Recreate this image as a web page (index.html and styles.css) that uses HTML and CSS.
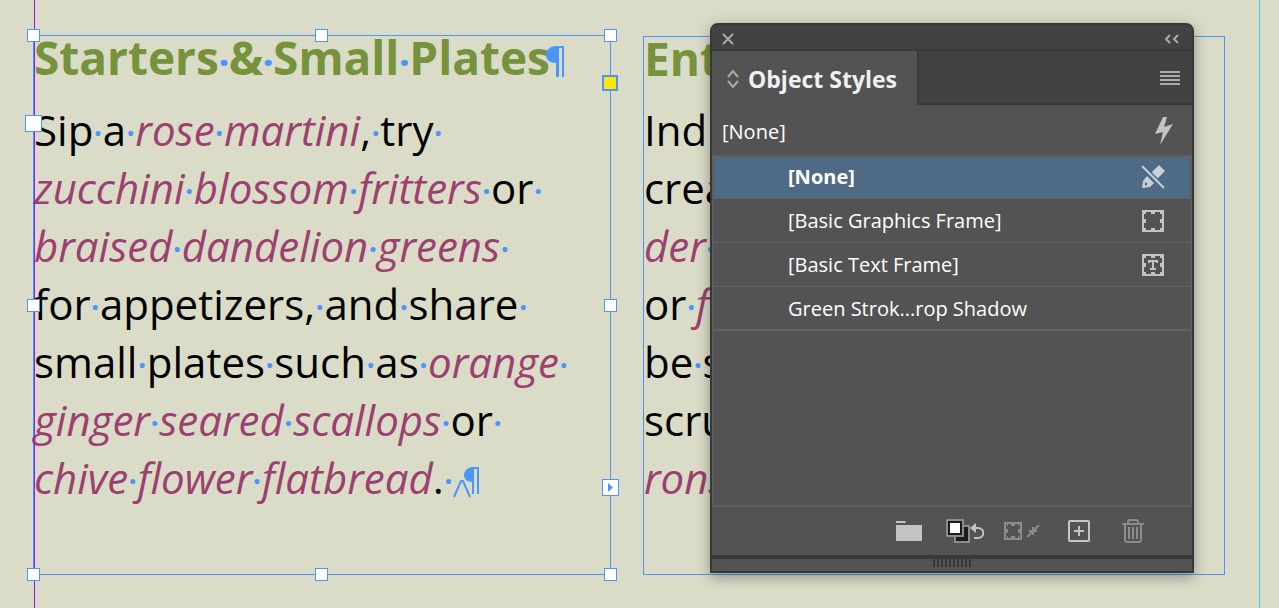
FILE: index.html
```html
<!DOCTYPE html>
<html lang="en">

<head>
    <meta charset="UTF-8">
    <meta name="viewport" content="width=device-width, initial-scale=1.0">
    <title>Object Styles</title>
    <link rel="stylesheet" href="styles.css">
</head>

<body>
    <div class="guide margin-guide"></div>
    <div class="guide column-guide"></div>

    <main class="spread">
        <section class="frame selected">
            <h2>Starters<b>·</b>&amp;<b>·</b>Small<b>·</b>Plates<svg class="pilcrow" viewBox="0 0 18 31"><path d="M18 0v31h-2V2h-3v29h-3V17C4 17 0 14 0 9S4 0 10 0z"/></svg></h2>
            <p>Sip<b>·</b>a<b>·</b><em>rose<b>·</b>martini</em>,<b>·</b>try<b>·</b></p>
            <p><em>zucchini<b>·</b>blossom<b>·</b>fritters</em><b>·</b>or<b>·</b></p>
            <p><em>braised<b>·</b>dandelion<b>·</b>greens</em><b>·</b></p>
            <p>for<b>·</b>appetizers,<b>·</b>and<b>·</b>share<b>·</b></p>
            <p>small<b>·</b>plates<b>·</b>such<b>·</b>as<b>·</b><em>orange</em><b>·</b></p>
            <p><em>ginger<b>·</b>seared<b>·</b>scallops</em><b>·</b>or<b>·</b></p>
            <p><em>chive<b>·</b>flower<b>·</b>flatbread</em>.<b>·</b><svg class="marker" viewBox="0 0 26 31"><path d="M26 0v27h-2V2h-3v25h-2V15c-5 0-8-3-8-7s4-8 9-8z"/><path class="caret" d="M1 30L8 14h2l7 16"/></svg></p>

            <span class="handle top left"></span>
            <span class="handle top center"></span>
            <span class="handle top right"></span>
            <span class="handle middle left"></span>
            <span class="handle middle right"></span>
            <span class="handle bottom left"></span>
            <span class="handle bottom center"></span>
            <span class="handle bottom right"></span>
            <span class="handle corner-options"></span>
            <span class="handle port in-port"></span>
            <span class="handle port out-port"><svg viewBox="0 0 15 15"><path d="M5 3l5 4.500l-5 4.500z"/></svg></span>
        </section>

        <section class="frame">
            <h2>Ent</h2>
            <p>Ind</p>
            <p>crea</p>
            <p><em>der<b>·</b></em></p>
            <p>or<b>·</b><em>f</em></p>
            <p>be<b>·</b>s</p>
            <p>scru</p>
            <p><em>rons</em></p>
        </section>
    </main>

    <aside class="panel">
        <header class="title-bar">
            <button aria-label="Close"><svg width="12" height="12" viewBox="0 0 12 12"><path d="M1 1l10 10M11 1L1 11"/></svg></button>
            <button aria-label="Collapse"><svg width="14" height="10" viewBox="0 0 14 10"><path d="M5 1L1 5l4 4M13 1L9 5l4 4"/></svg></button>
        </header>

        <div class="tabs">
            <button class="tab">
                <svg width="12" height="18" viewBox="0 0 12 18"><path d="M1 7l5-6 5 6M1 11l5 6 5-6"/></svg>
                Object Styles
            </button>
            <div class="tab-rest">
                <button aria-label="Panel menu"><svg class="solid" width="20" height="14" viewBox="0 0 20 14"><path d="M0 0h20v2H0zM0 4h20v2H0zM0 8h20v2H0zM0 12h20v2H0z"/></svg></button>
            </div>
        </div>

        <div class="current">
            <span>[None]</span>
            <button aria-label="Quick apply"><svg class="solid" width="18" height="28" viewBox="0 0 18 28"><path d="M8 0h4L9 10l9-3L5 28l3-13-8 2z"/></svg></button>
        </div>

        <ul class="styles">
            <li><button class="active">[None]
                <svg class="solid" width="24" height="24" viewBox="0 0 24 24"><path d="M18 0l6 6-8 8-6-6zM6 11l7 7-4 4-8 1 1-7z"/><path class="hole" d="M4 17l3 2-3 2z"/><path class="slash-gap" d="M0 0l24 24"/><path class="slash" d="M1 1l22 22"/></svg></button></li>
            <li><button>[Basic Graphics Frame]
                <svg width="22" height="22" viewBox="0 0 22 22"><path d="M1 1h20v20H1z"/><path class="notch" d="M2 3h2M9 3h4M18 3h2M2 19h2M9 19h4M18 19h2M3 9v4M19 9v4"/></svg></button></li>
            <li><button>[Basic Text Frame]
                <svg width="22" height="22" viewBox="0 0 22 22"><path d="M1 1h20v20H1z"/><path class="notch" d="M2 3h2M9 3h4M18 3h2M2 19h2M9 19h4M18 19h2M3 9v4M19 9v4"/><path d="M7 9V7h8v2M11 7v9M8 15h6"/></svg></button></li>
            <li><button>Green Strok...rop Shadow</button></li>
        </ul>

        <footer class="tools">
            <button aria-label="New group"><svg class="solid" width="26" height="20" viewBox="0 0 26 20"><path d="M0 0h9l1 2H0zM0 4h26v16H0z"/></svg></button>
            <button aria-label="Clear overrides"><svg width="38" height="24" viewBox="0 0 38 24"><path class="swatch" d="M9 7h14v16H9z"/><path d="M13 17h4v-5"/><path class="swatch" d="M1 1h16v16H1z"/><path class="white" d="M3 3h12v12H3z"/><path d="M27 9h5c7 0 7 10 0 10h-4"/><path class="fill" d="M24 9l6-5v10z"/></svg></button>
            <button class="dim" aria-label="Clear attributes"><svg width="37" height="18" viewBox="0 0 37 18"><path d="M1 1h16v16H1z"/><path class="notch" d="M3 3h1M7 3h4M14 3h1M3 15h1M7 15h4M14 15h1M3 7v4M15 7v4"/><path d="M23 15l4-4M31 7l4-4M25 9h8M29 5v8M27 11l5-5"/></svg></button>
            <button aria-label="Create new style"><svg width="22" height="22" viewBox="0 0 22 22"><rect x="1" y="1" width="20" height="20" rx="1"/><path d="M6 11h10M11 6v10"/></svg></button>
            <button class="dim" aria-label="Delete style"><svg width="22" height="24" viewBox="0 0 22 24"><path d="M0 5h22M3 5v16q0 2 2 2h12q2 0 2-2V5M6 5V3q0-2 2-2h6q2 0 2 2v2M7 8v12M11 8v12M15 8v12"/></svg></button>
        </footer>

        <div class="grip"><span></span></div>
    </aside>
</body>

</html>
```
FILE: styles.css
```css
* {
    box-sizing: border-box;
}

body {
    margin: 0;
    position: relative;
    min-height: 100vh;
    overflow: hidden;
    background-color: #dadcc7;
    color: #000;
    font-family: "Open Sans", sans-serif;
}

.guide {
    position: absolute;
    top: 0;
    bottom: 0;
    width: 1px;
}

.margin-guide {
    left: 34px;
    background-color: #9b12f5;
    z-index: 1;
}

.column-guide {
    right: 19px;
    background-color: #1fe6e0;
}

.spread {
    display: grid;
    grid-template-columns: 578fr 582fr;
    gap: 32px;
    padding: 35px 54px 33px 33px;
}

.frame {
    position: relative;
    min-width: 0;
    min-height: 540px;
    border: 1px solid #4a95ff;
}

.frame + .frame {
    margin-top: 1px;
    min-height: 539px;
}

.frame h2 {
    margin: 0 0 22px;
    font-size: 46px;
    line-height: 42px;
    font-weight: 700;
    color: #76923c;
    white-space: nowrap;
}

.frame p {
    margin: 0;
    font-size: 42px;
    line-height: 58px;
    white-space: nowrap;
}

.frame em {
    color: #9b4070;
}

.frame b {
    color: #4a95ff;
    font-size: 34px;
    font-style: normal;
    line-height: 1;
}

.frame p b {
    font-weight: 600;
}

.pilcrow,
.marker {
    fill: #4a95ff;
}

.pilcrow {
    width: 18px;
    height: 31px;
    margin-left: -4px;
    vertical-align: -2px;
}

.marker {
    width: 26px;
    height: 31px;
    vertical-align: -4px;
}

.caret {
    fill: none;
    stroke: #4a95ff;
    stroke-width: 2;
}

.handle {
    position: absolute;
    z-index: 2;
    width: 13px;
    height: 13px;
    border: 1px solid #4a95ff;
    background-color: #fff;
}

.top { top: -7px; }
.middle { top: calc(50% - 6px); }
.bottom { bottom: -7px; }
.left { left: -7px; }
.center { left: calc(50% - 7px); }
.right { right: -7px; }

.corner-options {
    top: 39px;
    right: -8px;
    width: 16px;
    height: 16px;
    border-width: 2px;
    background-color: #ffe600;
}

.port {
    width: 17px;
    height: 17px;
}

.in-port {
    top: 79px;
    left: -9px;
}

.out-port {
    right: -9px;
    bottom: 78px;
}

.out-port svg {
    display: block;
    fill: #4a95ff;
}

.panel {
    position: absolute;
    top: 23px;
    left: 710px;
    width: 484px;
    border: 2px solid #383838;
    border-radius: 8px 8px 0 0;
    background-color: #535353;
    color: #fff;
    box-shadow: 0 4px 14px rgba(0, 0, 0, 0.35);
    font-size: 20px;
}

.panel button {
    margin: 0;
    padding: 0;
    border: 0;
    background: none;
    color: inherit;
    font: inherit;
}

.panel svg {
    display: block;
    fill: none;
    stroke: #c4c4c4;
    stroke-width: 2;
}

.panel svg.solid {
    fill: #c4c4c4;
    stroke: none;
}

.title-bar {
    display: flex;
    align-items: center;
    justify-content: space-between;
    height: 26px;
    padding: 3px 13px 0 10px;
    border-bottom: 2px solid #383838;
    border-radius: 6px 6px 0 0;
    background-color: #424242;
}

.panel .title-bar svg,
.panel .tab svg {
    stroke: #aaa;
}

.tabs {
    display: flex;
    height: 54px;
}

.panel .tab {
    display: flex;
    align-items: center;
    gap: 9px;
    padding: 2px 20px 0 15px;
    font-size: 23px;
    font-weight: 700;
    color: #f0f0f0;
    white-space: nowrap;
}

.tab-rest {
    flex: 1;
    display: flex;
    align-items: center;
    justify-content: flex-end;
    padding: 2px 12px 0 0;
    border-left: 2px solid #383838;
    border-bottom: 2px solid #383838;
    background-color: #424242;
}

.panel .tab-rest svg {
    fill: #aaa;
}

.current {
    display: flex;
    align-items: center;
    justify-content: space-between;
    height: 50px;
    padding: 2px 19px 0 10px;
}

.styles {
    height: 352px;
    margin: 0;
    padding: 0;
    border: 2px solid #5e5e5e;
    list-style: none;
}

.styles li {
    height: 44px;
    border-bottom: 1px solid #626262;
}

.styles li:first-child {
    height: 42px;
}

.styles li:last-child {
    border-bottom-width: 2px;
}

.panel .styles button {
    display: flex;
    align-items: center;
    justify-content: space-between;
    width: 100%;
    height: 100%;
    padding: 0 26px 0 74px;
    text-align: left;
}

.panel .styles .active {
    padding-right: 25px;
    padding-bottom: 2px;
    background-color: #4f6a85;
    font-weight: 700;
}

.panel .active svg {
    fill: #c9d0d8;
}

.active .hole {
    fill: #4f6a85;
}

.active .slash-gap {
    stroke: #4f6a85;
    stroke-width: 5;
}

.active .slash {
    stroke: #c9d0d8;
    stroke-width: 2;
}

.tools {
    display: flex;
    align-items: center;
    justify-content: flex-end;
    height: 48px;
    padding-right: 48px;
}

.tools button + button {
    margin-left: 24px;
}

.tools button + .dim {
    margin-left: 20px;
}

.tools .dim + button {
    margin-left: 27px;
}

.tools button + .dim:last-child {
    margin-left: 32px;
}

.tools .dim svg {
    stroke: #8c8c8c;
}

.tools .swatch {
    fill: #1c1c1c;
    stroke: #8c8c8c;
}

.tools .white {
    fill: #fff;
    stroke: #1c1c1c;
}

.tools .fill {
    fill: #c4c4c4;
    stroke: none;
}

.grip {
    height: 16px;
    border-top: 4px solid #383838;
}

.grip span {
    display: block;
    width: 38px;
    height: 8px;
    margin: 0 auto;
    background: repeating-linear-gradient(90deg, #383838 0 2px, #535353 2px 4px);
}
```
